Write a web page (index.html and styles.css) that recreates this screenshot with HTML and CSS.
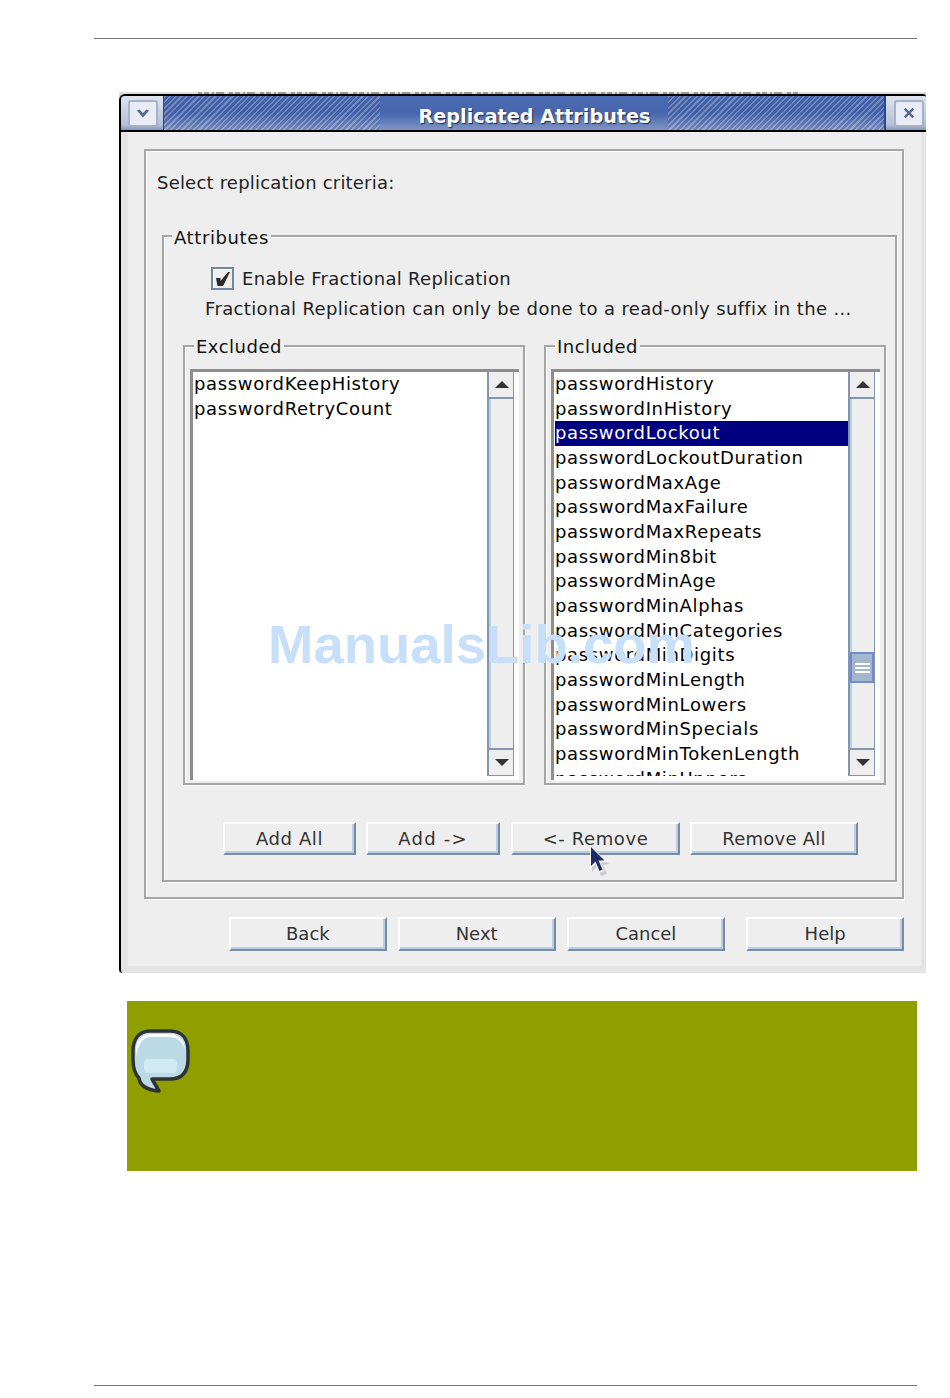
FILE: index.html
```html
<!DOCTYPE html>
<html lang="en">
<head>
<meta charset="utf-8">
<title>Replicated Attributes</title>
<link rel="stylesheet" href="styles.css">
</head>
<body>
<div class="page">
  <div class="rule rule-top"></div>
  <div class="dialog">
    <div class="cutoff"></div>
    <div class="titlebar">
      <div class="tb-cell tb-left">
        <div class="tb-btn">
          <svg class="tb-icon" viewBox="0 0 16 12"><path d="M1 3 L4 2 L8 6 L12 2 L15 3 L8 11 Z" fill="#5a6b85"/></svg>
        </div>
      </div>
      <div class="stripes"></div>
      <div class="title">Replicated Attributes</div>
      <div class="stripes"></div>
      <div class="tb-cell tb-right">
        <div class="tb-btn">
          <svg class="tb-icon" viewBox="0 0 14 14"><path d="M1 3 L3 1 L7 5 L11 1 L13 3 L9 7 L13 11 L11 13 L7 9 L3 13 L1 11 L5 7 Z" fill="#5a6b85"/></svg>
        </div>
      </div>
    </div>
    <div class="content">
      <div class="outer">
        <div class="criteria">Select replication criteria:</div>
        <div class="group attrs">
          <span class="legend">Attributes</span>
          <div class="check-row">
            <div class="checkbox">
              <svg class="check-icon" viewBox="0 0 14 14"><path d="M0 6 H4.500 V9 L12 0 H14 L7 14 H1.500 Z" fill="#2b2b2b"/></svg>
            </div>
            <span>Enable Fractional Replication</span>
          </div>
          <div class="note-line">Fractional Replication can only be done to a read-only suffix in the ...</div>
          <div class="panes">
            <div class="group pane">
              <span class="legend legend-pane">Excluded</span>
              <div class="listbox">
                <div class="list-white">
                  <div class="list-clip">
                    <div class="row">passwordKeepHistory</div>
                    <div class="row">passwordRetryCount</div>
                  </div>
                </div>
                <div class="scrollbar">
                  <div class="sb-btn sb-up"><span class="tri-up"></span></div>
                  <div class="sb-track"></div>
                  <div class="sb-btn sb-down"><span class="tri-down"></span></div>
                </div>
              </div>
            </div>
            <div class="group pane">
              <span class="legend legend-pane">Included</span>
              <div class="listbox">
                <div class="list-white">
                  <div class="list-clip">
                    <div class="row">passwordHistory</div>
                    <div class="row">passwordInHistory</div>
                    <div class="row selected">passwordLockout</div>
                    <div class="row">passwordLockoutDuration</div>
                    <div class="row">passwordMaxAge</div>
                    <div class="row">passwordMaxFailure</div>
                    <div class="row">passwordMaxRepeats</div>
                    <div class="row">passwordMin8bit</div>
                    <div class="row">passwordMinAge</div>
                    <div class="row">passwordMinAlphas</div>
                    <div class="row">passwordMinCategories</div>
                    <div class="row">passwordMinDigits</div>
                    <div class="row">passwordMinLength</div>
                    <div class="row">passwordMinLowers</div>
                    <div class="row">passwordMinSpecials</div>
                    <div class="row">passwordMinTokenLength</div>
                    <div class="row">passwordMinUppers</div>
                  </div>
                </div>
                <div class="scrollbar">
                  <div class="sb-btn sb-up"><span class="tri-up"></span></div>
                  <div class="sb-track">
                    <div class="thumb"><i></i><i></i><i></i></div>
                  </div>
                  <div class="sb-btn sb-down"><span class="tri-down"></span></div>
                </div>
              </div>
            </div>
          </div>
          <div class="btn-row-a">
            <div class="btn w-addall">Add All</div>
            <div class="btn w-add">Add -&gt;</div>
            <div class="btn w-remove">&lt;- Remove</div>
            <div class="btn w-removeall">Remove All</div>
          </div>
        </div>
      </div>
      <div class="btn-row-b">
        <div class="btn big">Back</div>
        <div class="btn big">Next</div>
        <div class="btn big wider">Cancel</div>
        <div class="btn big last">Help</div>
      </div>
    </div>
  </div>
  <div class="callout">
    <svg class="bubble" viewBox="0 0 60 66">
      <path d="M20 4 H40 C52 4 58 12 58 24 V32 C58 45 52 52 40 52 H22 L29 64 C18 63 10 60 9 51 C4 46 3 40 3 32 V24 C3 12 9 4 20 4 Z" fill="#bcd9e6" stroke="#2e3436" stroke-width="3.500" stroke-linejoin="round"/>
      <path d="M6 30 V24 C6 13 12 7 21 7 H39 C49 7 54 13 55 22 C52 14 47 10 39 10 H21 C12 10 8 18 6 30 Z" fill="#ffffff"/>
      <rect x="14" y="32" width="33" height="14" rx="4" fill="#cfe9f5"/>
    </svg>
  </div>
  <div class="rule rule-bottom"></div>
  <div class="watermark">ManualsLib.com</div>
  <svg class="cursor" viewBox="0 0 20 32">
    <path d="M3 3 L3 27 L8 22 L12 31 L18 29 L14 20 L20 19 Z" fill="#000000" opacity="0.15"/>
    <path d="M1 0 L1 24 L6.500 19 L10 28 L15 26 L11.500 17.500 L18 17 Z" fill="#ffffff" opacity="0.9"/>
    <path d="M2 2 L2 21 L6.500 16.500 L10.500 26 L13.500 24.500 L9.500 15.500 L15.500 15.500 Z" fill="#1c2a66"/>
  </svg>
</div>
</body>
</html>
```
FILE: styles.css
```css
* { box-sizing: border-box; }
html, body { margin: 0; padding: 0; background: #ffffff; }
body { font-family: "DejaVu Sans", sans-serif; font-size: 18px; color: #222222; overflow: hidden; }
.page { position: relative; width: 950px; height: 1398px; padding-top: 38px; }

.rule { height: 1px; background: #777777; margin-left: 94px; width: 823px; }
.rule-bottom { margin-top: 214px; }

.dialog { display: flex; flex-direction: column; width: 807px; height: 881px; margin: 53px 0 0 119px; background: #dddddd; }
.cutoff { height: 2px; background: repeating-linear-gradient(90deg, #999999 0 4px, #dddddd 4px 6px, #999999 6px 11px, #dddddd 11px 14px, #999999 14px 16px, #dddddd 16px 18px, #999999 18px 26px, #dddddd 26px 31px) 79px 0 / 603px 2px no-repeat, #dddddd; }

.titlebar { display: flex; height: 38px; border-top: 2px solid #000000; border-bottom: 2px solid #000000; border-left: 2px solid #000000; border-top-left-radius: 6px; border-top-right-radius: 3px; overflow: hidden; background: linear-gradient(180deg, #4d6bb0 0%, #4765ad 50%, #7f95c4 100%); }
.tb-cell { display: flex; align-items: center; }
.tb-left { width: 43px; padding-left: 7px; background: linear-gradient(180deg, #dfe4ee, #b4c0d8 85%, #8195bd); border-right: 1px solid #2d4684; }
.tb-right { width: 42px; padding-left: 8px; background: linear-gradient(180deg, #dfe4ee, #b4c0d8 85%, #8195bd); border-left: 2px solid #2d4684; }
.tb-btn { display: flex; align-items: center; justify-content: center; width: 30px; height: 27px; background: #e9ecf6; border: 2px solid #a8b2c6; border-radius: 3px; }
.tb-icon { width: 14px; height: 12px; }
.stripes { flex: 1; background: repeating-linear-gradient(135deg, rgba(255,255,255,0.22) 0 1.500px, rgba(20,40,110,0.12) 1.500px 4px); }
.title { display: flex; align-items: flex-end; margin-left: 21px; padding: 0 18px; font-weight: bold; font-size: 19.200px; line-height: 26px; color: #ffffff; text-shadow: 1px 1px 1px #1d2b50; }

.content { flex: 1; border-left: 2px solid #000000; border-bottom-left-radius: 4px; background: #eeeeee; box-shadow: inset 7px 0 0 #e4e4e4, inset -5px 0 0 #e4e4e4, inset 0 -7px 0 #e4e4e4; padding: 17px 22px 0 23px; }
.outer { height: 750px; width: 760px; border: 2px solid #a5a5a5; box-shadow: 1px 1px 0 #ffffff, inset 1px 1px 0 #ffffff; padding: 20px 0 0 16px; letter-spacing: 0.300px; }
.criteria { line-height: 24px; margin-left: -5px; letter-spacing: 0.200px; }

.group { position: relative; border: 2px solid #a5a5a5; box-shadow: 1px 1px 0 #ffffff, inset 1px 1px 0 #ffffff; }
.legend { position: absolute; top: -11px; left: 8px; padding: 0 2px; line-height: 24px; background: #eeeeee; color: #111111; letter-spacing: 0.600px; }
.attrs { width: 735px; height: 647px; margin: 40px 0 0 0; padding-top: 30px; }
.check-row { display: flex; align-items: center; gap: 8px; height: 23px; margin-left: 47px; }
.checkbox { display: flex; align-items: center; justify-content: center; width: 23px; height: 23px; border: 2px solid #74879f; box-shadow: inset 1px 1px 0 #ffffff; background: #eeeeee; }
.check-icon { width: 14px; height: 14px; }
.note-line { margin: 7px 0 0 41px; line-height: 24px; white-space: nowrap; letter-spacing: 0.360px; }
.panes { display: flex; gap: 19px; margin: 24px 0 0 19px; }
.pane { width: 342px; height: 440px; padding: 22px 0 0 5px; }
.legend-pane { top: -12px; left: 9px; letter-spacing: 0.500px; }

.listbox { display: flex; width: 329px; height: 411px; border-top: 3px solid #8e8e8e; border-left: 3px solid #8e8e8e; background: #ffffff; }
.list-white { width: 294px; height: 409px; background: #ffffff; }
.list-clip { height: 404px; overflow: hidden; padding-left: 1px; }
.row { height: 24.660px; line-height: 24.660px; color: #000000; white-space: nowrap; letter-spacing: 0.650px; }
.selected { background: #000080; color: #ffffff; }

.scrollbar { display: flex; flex-direction: column; width: 27px; height: 404px; border-left: 2px solid #8496ad; border-right: 1px solid #8496ad; border-bottom: 1px solid #8496ad; background: #eeeeee; }
.sb-btn { display: flex; align-items: center; justify-content: center; height: 27px; padding-left: 2px; background: #eeeeee; }
.sb-up { border-bottom: 2px solid #8496ad; box-shadow: 0 2px 0 #b8cfe5; }
.sb-down { border-top: 2px solid #8496ad; }
.sb-track { position: relative; flex: 1; background: #eeeeee; box-shadow: inset 2px 0 0 #b8cfe5; }
.tri-up { width: 0; height: 0; border: 7px solid transparent; border-top: 0; border-bottom: 7px solid #333333; }
.tri-down { width: 0; height: 0; border: 7px solid transparent; border-bottom: 0; border-top: 7px solid #333333; }
.thumb { position: absolute; top: 253px; left: 0; width: 24px; height: 31px; display: flex; flex-direction: column; align-items: center; justify-content: center; gap: 2px; background: #a4b7ce; border: 2px solid #6f8ccc; }
.thumb i { display: block; width: 15px; height: 2px; background: #ffffff; }

.btn { display: flex; align-items: center; justify-content: center; height: 33px; border: 2px solid #ffffff; border-right-color: #7a8a9f; border-bottom-color: #7a8a9f; box-shadow: inset -2px -2px 0 #b8cfe5; background: #eeeeee; color: #333333; }
.btn-row-a { display: flex; margin: 37px 0 0 59px; letter-spacing: 0.600px; }
.w-addall { width: 133px; margin-right: 10px; }
.w-add { width: 134px; margin-right: 11px; letter-spacing: 1.200px; }
.w-remove { width: 169px; margin-right: 10px; }
.w-removeall { width: 168px; letter-spacing: 0.250px; }
.btn-row-b { display: flex; gap: 11px; margin: 18px 0 0 85px; }
.big { width: 158px; height: 34px; padding-bottom: 2px; }
.wider { width: 159px; }
.last { margin-left: 10px; }

.callout { width: 790px; height: 170px; margin: 28px 0 0 127px; padding: 26px 0 0 3px; background: #8f9f00; }
.bubble { display: block; width: 60px; height: 66px; }

.watermark { position: absolute; left: 268px; top: 613px; font-family: "Liberation Sans", Arial, sans-serif; font-weight: bold; font-size: 54.500px; line-height: 64px; color: #c8dffa; white-space: nowrap; }
.cursor { position: absolute; left: 589px; top: 845px; width: 20px; height: 32px; }
```
